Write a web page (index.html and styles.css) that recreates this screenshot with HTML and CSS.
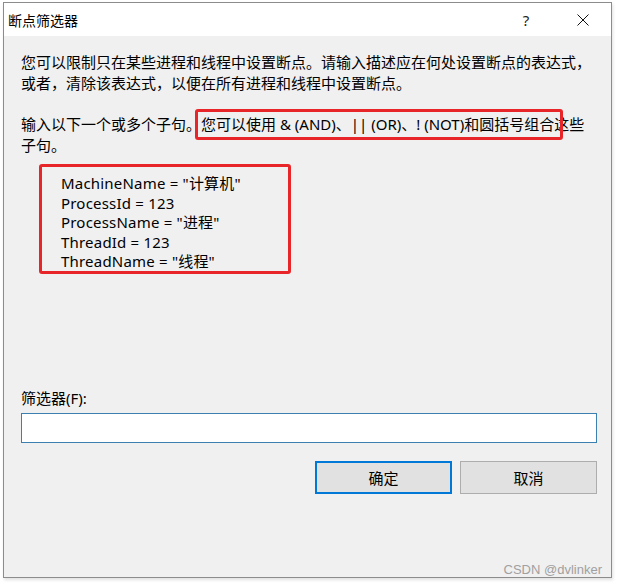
FILE: index.html
```html
<!DOCTYPE html>
<html lang="zh-CN">
<head>
<meta charset="utf-8">
<title>断点筛选器</title>
<link rel="stylesheet" href="styles.css">
</head>
<body>
<div class="window">
  <div class="titlebar">
    <span class="title">断点筛选器</span>
    <span class="tb-help">?</span>
    <span class="tb-close">
      <svg width="12" height="12" viewBox="0 0 12 12"><path d="M0.5 0.5 L11.5 11.5 M11.5 0.5 L0.5 11.5" stroke="#111" stroke-width="1" fill="none"/></svg>
    </span>
  </div>
  <div class="content">
    <p class="para">您可以限制只在某些进程和线程中设置断点。请输入描述应在何处设置断点的表达式，或者，清除该表达式，以便在所有进程和线程中设置断点。</p>
    <p class="para para2">输入以下一个或多个子句。<span class="mark">您可以使用 &amp; (AND)、|| (OR)、! (NOT)和圆括号组合</span>这些子句。</p>
    <div class="code">
      <div>MachineName = "计算机"</div>
      <div>ProcessId = 123</div>
      <div>ProcessName = "进程"</div>
      <div>ThreadId = 123</div>
      <div>ThreadName = "线程"</div>
    </div>
    <div class="spacer"></div>
    <label class="label">筛选器(F):</label>
    <div class="input"></div>
    <div class="buttons">
      <button class="btn btn-default">确定</button>
      <button class="btn">取消</button>
    </div>
  </div>
  <div class="watermark">CSDN @dvlinker</div>
</div>
</body>
</html>
```

FILE: styles.css
```css
html, body {
  margin: 0;
  padding: 0;
  background: #ffffff;
}
body {
  width: 617px;
  height: 585px;
  overflow: hidden;
  font-family: "Noto Sans", "Noto Sans CJK SC", sans-serif;
  color: #000;
}
.window {
  position: relative;
  margin: 2px 5px 0 3px;
  height: 574px;
  border: 1px solid #8c8c8c;
  background: #f0f0f0;
  display: flex;
  flex-direction: column;
  box-shadow: 1px 2px 3px rgba(0,0,0,0.12);
}
.titlebar {
  height: 33px;
  background: #ffffff;
  display: flex;
  align-items: center;
  flex-shrink: 0;
}
.title {
  font-family: "Noto Sans CJK SC", sans-serif;
  font-size: 14px;
  padding-left: 4px;
  flex: 1;
}
.tb-help {
  font-family: "Noto Sans", sans-serif;
  font-size: 15px;
  width: 20px;
  text-align: center;
  margin-right: 41px;
  color: #222;
}
.tb-close {
  display: flex;
  width: 12px;
  height: 12px;
  margin-right: 22px;
}
.content {
  flex: 1;
  display: flex;
  flex-direction: column;
  padding: 16px 14px 0 17px;
  font-size: 15px;
}
.para {
  margin: 0;
  line-height: 21px;
  font-family: "Noto Sans", "Noto Sans CJK SC", sans-serif;
  width: 572px;
}
.para2 {
  margin-top: 20px;
}
.mark {
  position: relative;
}
.mark::after {
  content: "";
  position: absolute;
  left: -6px;
  right: -9px;
  top: -5px;
  bottom: -6px;
  border: 3px solid #e8262a;
  border-radius: 3px;
}
.code {
  margin: 8px 0 0 18px;
  border: 3px solid #e8262a;
  border-radius: 3px;
  padding: 7px 0 0 19px;
  line-height: 19.5px;
  letter-spacing: 0.2px;
  height: 97px;
  box-sizing: content-box;
  width: 227px;
}
.spacer {
  height: 114px;
}
.label {
  font-family: "Noto Sans", "Noto Sans CJK SC", sans-serif;
  font-size: 15px;
  line-height: 20px;
}
.input {
  margin-top: 5px;
  height: 28px;
  width: 574px;
  border: 1px solid #3c7fb1;
  background: #fff;
}
.buttons {
  display: flex;
  justify-content: flex-end;
  gap: 8px;
  margin-top: 18px;
  width: 576px;
}
.btn {
  width: 137px;
  height: 33px;
  border: 1px solid #adadad;
  background: #e1e1e1;
  font-family: "Noto Sans CJK SC", sans-serif;
  font-size: 15px;
  color: #000;
  padding: 0;
}
.btn-default {
  border: 2px solid #0078d7;
}
.watermark {
  position: absolute;
  right: 9px;
  bottom: 0px;
  font-family: "Liberation Sans", Arial, sans-serif;
  font-size: 13px;
  color: #a0a0a0;
}
```
